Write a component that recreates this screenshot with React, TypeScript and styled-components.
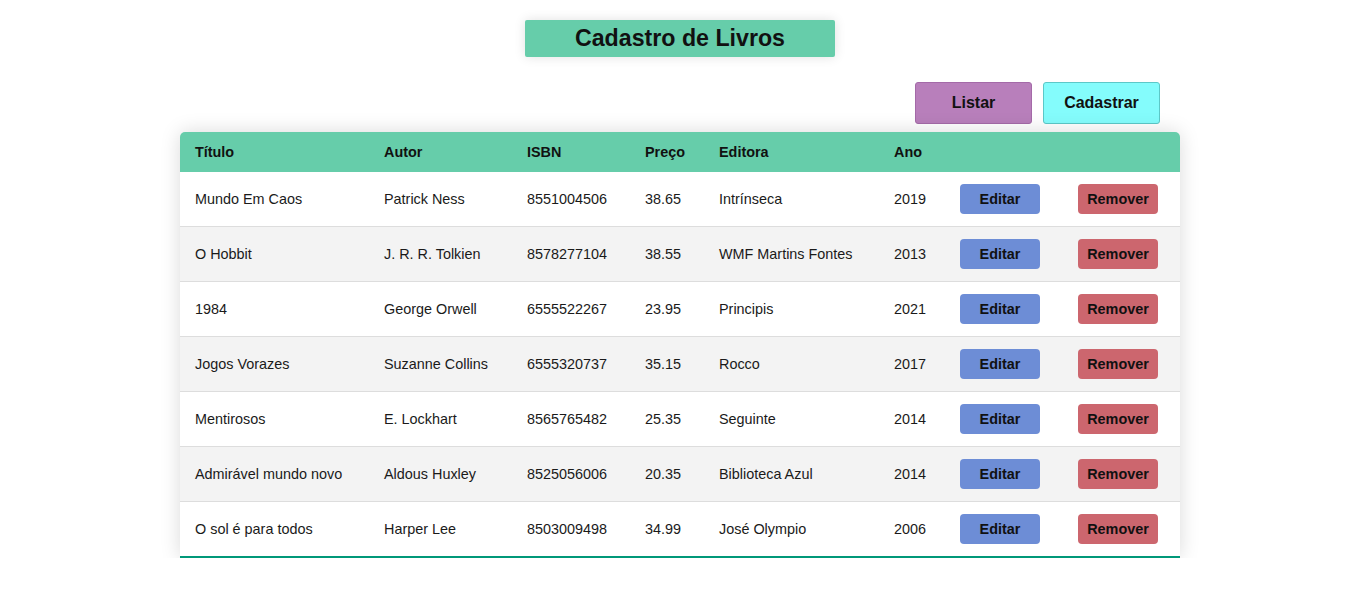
import React from "react";
import styled, { createGlobalStyle } from "styled-components";

const GlobalStyle = createGlobalStyle`
  html, body { margin: 0; padding: 0; background: #ffffff; }
  body { font-family: "Liberation Sans", Arial, sans-serif; color: #111; }
`;

const Page = styled.div`
  display: flex;
  flex-direction: column;
  align-items: center;
  padding: 20px 2px 0 0;
`;

const Title = styled.h1`
  margin: 0;
  width: 310px;
  height: 37px;
  line-height: 37px;
  text-align: center;
  background: #66cdaa;
  font-size: 23.2px;
  font-weight: 700;
  color: #111;
  border-radius: 2px;
  box-shadow: 0 0 12px rgba(0, 0, 0, 0.12);
`;

const Content = styled.div`
  width: 1000px;
  display: flex;
  flex-direction: column;
`;

const Toolbar = styled.div`
  display: flex;
  justify-content: flex-end;
  gap: 11px;
  margin: 25px 20px 8px 0;
`;

const NavButton = styled.button<{ $bg: string; $border: string }>`
  width: 117px;
  height: 42px;
  background: ${(p) => p.$bg};
  border: 1px solid ${(p) => p.$border};
  border-radius: 3px;
  font-family: "Liberation Sans", Arial, sans-serif;
  font-size: 16px;
  font-weight: 700;
  color: #111;
  cursor: pointer;
  padding: 0;
`;

const TableWrap = styled.div`
  border-radius: 5px 5px 0 0;
  overflow: hidden;
  box-shadow: 0 0 20px rgba(0, 0, 0, 0.15);
`;

const Table = styled.table`
  width: 1000px;
  border-collapse: collapse;
  table-layout: fixed;
  font-size: 14.4px;
`;

const HeadRow = styled.tr`
  background: #66cdaa;
  text-align: left;
`;

const Th = styled.th`
  padding: 12px 15px;
  height: 16px;
  font-weight: 700;
  color: #111;
  text-align: left;
`;

const Row = styled.tr`
  border-bottom: 1px solid #dddddd;
  &:nth-of-type(even) { background: #f3f3f3; }
  &:last-of-type { border-bottom: 2px solid #009879; }
`;

const Td = styled.td`
  padding: 12px 15px;
  height: 30px;
  color: #1a1a1a;
  vertical-align: middle;
`;

const ActionButton = styled.button<{ $bg: string }>`
  display: block;
  width: 80px;
  height: 30px;
  padding: 0;
  border: none;
  border-radius: 4px;
  background: ${(p) => p.$bg};
  font-family: "Liberation Sans", Arial, sans-serif;
  font-size: 14.4px;
  font-weight: 700;
  color: #111;
  cursor: pointer;
`;

const widths = [189, 143, 118, 74, 175, 66, 118, 117];

const books = [
  ["Mundo Em Caos", "Patrick Ness", "8551004506", "38.65", "Intrínseca", "2019"],
  ["O Hobbit", "J. R. R. Tolkien", "8578277104", "38.55", "WMF Martins Fontes", "2013"],
  ["1984", "George Orwell", "6555522267", "23.95", "Principis", "2021"],
  ["Jogos Vorazes", "Suzanne Collins", "6555320737", "35.15", "Rocco", "2017"],
  ["Mentirosos", "E. Lockhart", "8565765482", "25.35", "Seguinte", "2014"],
  ["Admirável mundo novo", "Aldous Huxley", "8525056006", "20.35", "Biblioteca Azul", "2014"],
  ["O sol é para todos", "Harper Lee", "8503009498", "34.99", "José Olympio", "2006"],
];

export default function App() {
  return (
    <>
      <GlobalStyle />
      <Page>
        <Title>Cadastro de Livros</Title>
        <Content>
          <Toolbar>
            <NavButton $bg="#b87fbb" $border="#a46aa8">Listar</NavButton>
            <NavButton $bg="#84fcfc" $border="#5cc8c8">Cadastrar</NavButton>
          </Toolbar>
          <TableWrap>
            <Table>
              <colgroup>
                {widths.map((w, i) => (
                  <col key={i} style={{ width: w }} />
                ))}
              </colgroup>
              <thead>
                <HeadRow>
                  <Th>Título</Th>
                  <Th>Autor</Th>
                  <Th>ISBN</Th>
                  <Th>Preço</Th>
                  <Th>Editora</Th>
                  <Th>Ano</Th>
                  <Th />
                  <Th />
                </HeadRow>
              </thead>
              <tbody>
                {books.map((b) => (
                  <Row key={b[2]}>
                    {b.map((c, i) => (
                      <Td key={i}>{c}</Td>
                    ))}
                    <Td>
                      <ActionButton $bg="#6d8dd6">Editar</ActionButton>
                    </Td>
                    <Td>
                      <ActionButton $bg="#cc666e">Remover</ActionButton>
                    </Td>
                  </Row>
                ))}
              </tbody>
            </Table>
          </TableWrap>
        </Content>
      </Page>
    </>
  );
}
